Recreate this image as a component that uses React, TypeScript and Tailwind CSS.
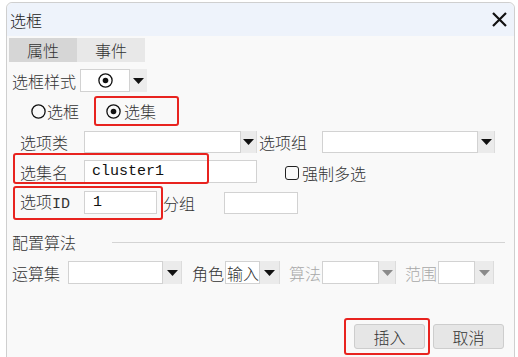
import React from 'react';

// Small glyphs used by the form controls
const Arrow: React.FC<{ disabled?: boolean }> = ({ disabled }) => (
  <svg width="11" height="6" viewBox="0 0 11 6">
    <path d="M0 0 L11 0 L5.5 6 Z" fill={disabled ? '#8a8a8a' : '#111'} />
  </svg>
);

const Radio: React.FC<{ checked?: boolean }> = ({ checked }) => (
  <svg width="15" height="15" viewBox="0 0 15 15">
    <circle cx="7.5" cy="7.5" r="6.6" fill="none" stroke="#111" strokeWidth="1.3" />
    {checked && <circle cx="7.5" cy="7.5" r="2.8" fill="#111" />}
  </svg>
);

type SelectProps = { w: number; aw: number; h?: number; disabled?: boolean; children?: React.ReactNode };

const Select: React.FC<SelectProps> = ({ w, aw, h = 23, disabled, children }) => (
  <div className="flex shrink-0" style={{ height: h }}>
    <div className="bg-white border border-[#d2d2d2] flex items-center" style={{ width: w }}>
      {children}
    </div>
    <div className="bg-[#ebebeb] border-r border-[#dcdcdc] flex items-center justify-center" style={{ width: aw }}>
      <Arrow disabled={disabled} />
    </div>
  </div>
);

const Mark: React.FC<{ className: string }> = ({ className }) => (
  <div className={`absolute border-2 border-[#e8231f] rounded-[3px] ${className}`} />
);

const App: React.FC = () => {
  return (
    <div className="relative w-[518px] h-[357px] bg-white overflow-hidden text-[16px] font-light leading-none text-[#333] font-['Noto_Sans_CJK_SC','Noto_Sans',sans-serif]">
      <div className="ml-[6px] mt-[2px] w-[509px] h-[370px] border border-[#cfcfcf] rounded-t-[6px] bg-[#f9f9f9]">
        {/* title bar */}
        <div className="h-[33px] bg-[#eef3fb] rounded-t-[6px] flex items-center justify-between pl-[3px] pr-[7px]">
          <span className="text-[#222]">选框</span>
          <svg width="15" height="15" viewBox="0 0 15 15">
            <path d="M1 1 L14 14 M14 1 L1 14" stroke="#111" strokeWidth="2.2" />
          </svg>
        </div>

        {/* tabs */}
        <div className="flex mt-[2px] ml-[2px] h-[24px]">
          <div className="w-[68px] bg-[#d6d6d6] flex items-center justify-center">属性</div>
          <div className="w-[68px] bg-[#e8e8e8] flex items-center justify-center">事件</div>
        </div>

        {/* 选框样式 */}
        <div className="flex items-center mt-[7px] pl-[5px] h-[23px]">
          <span className="w-[68px]">选框样式</span>
          <div className="flex h-[23px]">
            <div className="w-[50px] bg-white border border-[#d2d2d2] flex items-center justify-center">
              <Radio checked />
            </div>
            <div className="w-[17px] bg-[#ececec] flex items-center justify-center">
              <Arrow />
            </div>
          </div>
        </div>

        {/* radios */}
        <div className="flex items-center mt-[4px] h-[30px] pl-[24px]">
          <Radio />
          <span className="ml-[1px]">选框</span>
          <div className="ml-[27px] flex items-center">
            <Radio checked />
            <span className="ml-[3px]">选集</span>
          </div>
        </div>

        {/* 选项类 / 选项组 */}
        <div className="flex items-center mt-[5px] pl-[13px] h-[22px]">
          <span className="w-[64px]">选项类</span>
          <Select w={157} aw={16} h={22} />
          <span className="w-[65px] pl-[2px]">选项组</span>
          <Select w={156} aw={17} h={22} />
        </div>

        {/* 选集名 */}
        <div className="flex items-center mt-[7px] pl-[13px] h-[23px]">
          <span className="w-[64px]">选集名</span>
          <div className="w-[173px] h-[23px] bg-white border border-[#d2d2d2] flex items-center pl-[7px] text-[15px] font-normal text-[#111] font-['Liberation_Mono',monospace]">
            cluster1
          </div>
          <div className="ml-[28px] mt-[2px] flex items-center">
            <div className="w-[14px] h-[14px] border-[1.3px] border-[#222] rounded-[3px]" />
            <span className="ml-[3px]">强制多选</span>
          </div>
        </div>

        {/* 选项ID / 分组 */}
        <div className="flex items-center mt-[8px] pl-[13px] h-[23px]">
          <span className="w-[64px]">
            选项<span className="font-normal text-[15px] font-['Liberation_Mono',monospace]">ID</span>
          </span>
          <div className="w-[73px] h-[23px] bg-white border border-[#d2d2d2] flex items-center pl-[8px] text-[15px] font-normal text-[#111] font-['Liberation_Mono',monospace]">
            1
          </div>
          <span className="w-[67px] pl-[6px]">分组</span>
          <div className="w-[74px] h-[22px] bg-white border border-[#d2d2d2]" />
        </div>

        {/* 配置算法 */}
        <div className="flex items-center mt-[18px] pl-[5px] pr-[9px] h-[20px]">
          <span className="w-[100px]">配置算法</span>
          <div className="flex-1 h-px bg-[#d4d4d4]" />
        </div>

        {/* 运算集 row */}
        <div className="flex items-center mt-[9px] pl-[5px] h-[23px]">
          <span className="w-[56px]">运算集</span>
          <Select w={95} aw={19} />
          <span className="w-[33px] ml-[10px]">角色</span>
          <Select w={35} aw={20}>
            <span className="pl-[1px]">输入</span>
          </Select>
          <span className="w-[33px] ml-[9px] text-[#a8a8a8]">算法</span>
          <Select w={57} aw={17} disabled />
          <span className="w-[33px] ml-[9px] text-[#a8a8a8]">范围</span>
          <Select w={37} aw={19} disabled />
        </div>

        {/* buttons */}
        <div className="flex justify-end gap-[8px] mt-[40px] pr-[10px]">
          <button className="w-[71px] h-[25px] bg-[#e6e6e6] border border-[#cdcdcd] rounded-[3px] text-[#333]">插入</button>
          <button className="w-[71px] h-[25px] bg-[#e6e6e6] border border-[#cdcdcd] rounded-[3px] text-[#333]">取消</button>
        </div>
      </div>

      {/* annotation boxes */}
      <Mark className="left-[94px] top-[96px] w-[85px] h-[30px]" />
      <Mark className="left-[13px] top-[153px] w-[196px] h-[31px]" />
      <Mark className="left-[13px] top-[186px] w-[150px] h-[34px]" />
      <Mark className="left-[344px] top-[318px] w-[86px] h-[37px]" />
    </div>
  );
};

export default App;
